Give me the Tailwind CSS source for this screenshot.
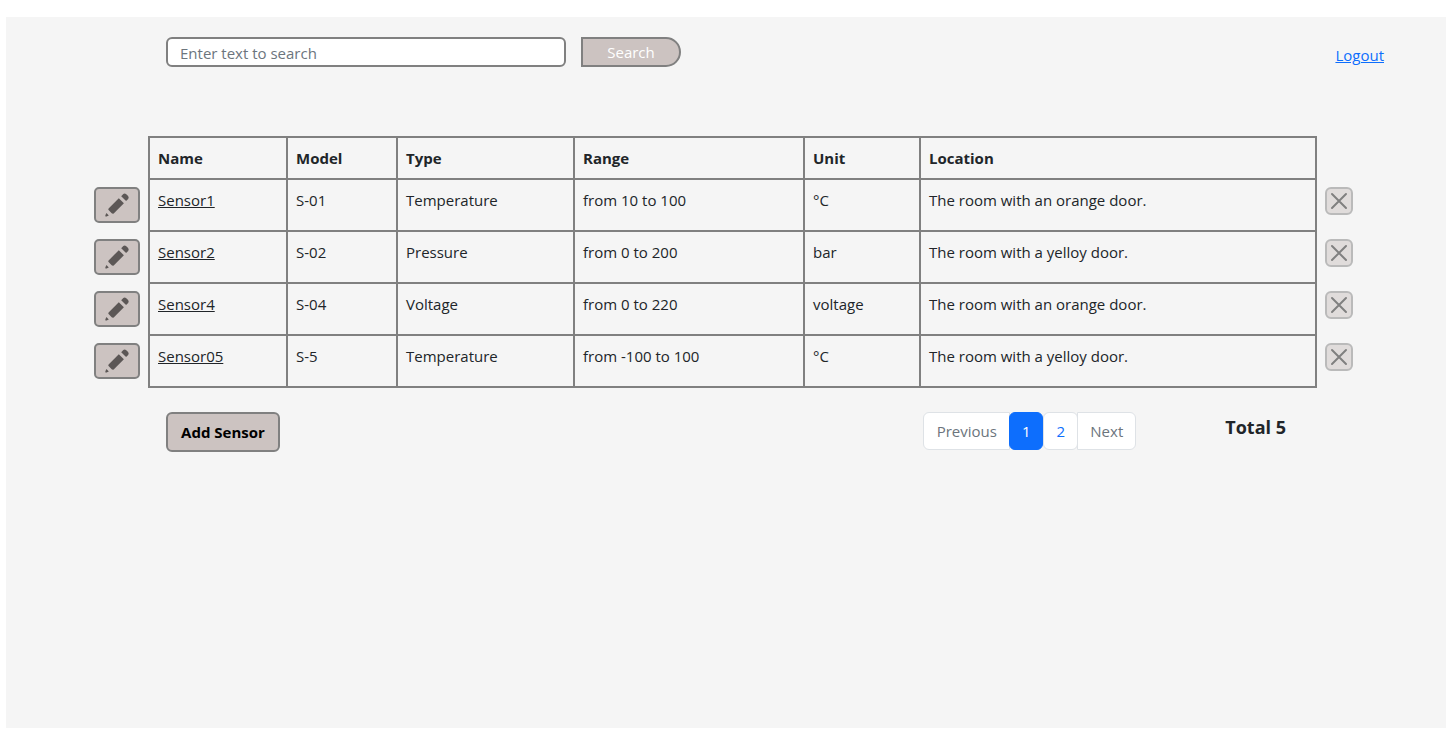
<!DOCTYPE html>
<html lang="en">
<head>
<meta charset="utf-8">
<meta name="viewport" content="width=device-width, initial-scale=1">
<title>Sensors</title>
<script src="https://cdn.jsdelivr.net/npm/@tailwindcss/browser@4"></script>
</head>
<body class="flex min-h-screen flex-col bg-white pt-[17px] pr-[5px] pb-2 pl-[6px] font-['Open_Sans','Noto_Sans',sans-serif] text-[15px] leading-6 text-[#212529]">
<svg class="hidden" aria-hidden="true">
  <symbol id="pencil" viewBox="0 0 26 26">
    <path d="M2.4 21 4.8 23.4 2.6 24.4Q.8 25 1.4 23.2Z"/>
    <path d="M4.6 16.4 14.8 6.2 19.9 11.3 9.7 21.5Q8.6 22 7.7 21.2L4.8 18.3Q3.8 17.3 4.6 16.4Z"/>
    <path d="M17.2 4.2 19.3 2Q20.6.9 22 2L24.1 4.1Q25.2 5.5 24.2 6.9L22.1 9Z"/>
  </symbol>
  <symbol id="cross" viewBox="0 0 18 18"><path d="M2 2 16 16M16 2 2 16" fill="none" stroke="#808080" stroke-width="2" stroke-linecap="round"/></symbol>
</svg>
<main class="grow bg-[#f5f5f5] pt-5 pr-[85px] pl-20">
  <header class="flex items-start pl-20">
    <form class="flex gap-[15px]">
      <input type="search" aria-label="Search sensors" placeholder="Enter text to search" class="h-[30px] w-[400px] rounded-md border-2 border-[#808080] bg-white px-3 pt-[2px] placeholder:text-[#6c757d]">
      <button type="button" class="h-[30px] w-[100px] rounded-r-full border-2 border-[#808080] bg-[#ccc3c1] text-white">Search</button>
    </form>
    <a href="#" class="mt-[6px] -mr-[23px] ml-auto text-[#0d6efd] underline">Logout</a>
  </header>

  <table class="mt-[69px] w-full table-fixed border-collapse text-left [&_td]:p-2 [&_td]:align-top [&_th]:p-2">
    <colgroup><col class="w-[63px]"><col class="w-[138px]"><col class="w-[110px]"><col class="w-[177px]"><col class="w-[230px]"><col class="w-[116px]"><col><col class="w-[45px]"></colgroup>
    <thead>
      <tr><td></td><th class="border-2 border-[#808080]">Name</th><th class="border-2 border-[#808080]">Model</th><th class="border-2 border-[#808080]">Type</th><th class="border-2 border-[#808080]">Range</th><th class="border-2 border-[#808080]">Unit</th><th class="border-2 border-[#808080]">Location</th><td></td></tr>
    </thead>
    <tbody>
      <tr>
        <td><button aria-label="Edit Sensor1" class="flex h-9 w-[46px] items-center justify-center rounded-[5px] border-2 border-[#808080] bg-[#ccc3c1]"><svg class="size-[26px] fill-[#5c5756]"><use href="#pencil"/></svg></button></td>
        <td class="border-2 border-[#808080]"><a href="#" class="underline">Sensor1</a></td><td class="border-2 border-[#808080]">S-01</td><td class="border-2 border-[#808080]">Temperature</td><td class="border-2 border-[#808080]">from 10 to 100</td><td class="border-2 border-[#808080]">°C</td><td class="border-2 border-[#808080]">The room with an orange door.</td>
        <td><button aria-label="Delete Sensor1" class="flex size-7 items-center justify-center rounded-[6px] border-2 border-[#bababa] bg-[#e0dcdb]"><svg class="size-[18px]"><use href="#cross"/></svg></button></td>
      </tr>
      <tr>
        <td><button aria-label="Edit Sensor2" class="flex h-9 w-[46px] items-center justify-center rounded-[5px] border-2 border-[#808080] bg-[#ccc3c1]"><svg class="size-[26px] fill-[#5c5756]"><use href="#pencil"/></svg></button></td>
        <td class="border-2 border-[#808080]"><a href="#" class="underline">Sensor2</a></td><td class="border-2 border-[#808080]">S-02</td><td class="border-2 border-[#808080]">Pressure</td><td class="border-2 border-[#808080]">from 0 to 200</td><td class="border-2 border-[#808080]">bar</td><td class="border-2 border-[#808080]">The room with a yelloy door.</td>
        <td><button aria-label="Delete Sensor2" class="flex size-7 items-center justify-center rounded-[6px] border-2 border-[#bababa] bg-[#e0dcdb]"><svg class="size-[18px]"><use href="#cross"/></svg></button></td>
      </tr>
      <tr>
        <td><button aria-label="Edit Sensor4" class="flex h-9 w-[46px] items-center justify-center rounded-[5px] border-2 border-[#808080] bg-[#ccc3c1]"><svg class="size-[26px] fill-[#5c5756]"><use href="#pencil"/></svg></button></td>
        <td class="border-2 border-[#808080]"><a href="#" class="underline">Sensor4</a></td><td class="border-2 border-[#808080]">S-04</td><td class="border-2 border-[#808080]">Voltage</td><td class="border-2 border-[#808080]">from 0 to 220</td><td class="border-2 border-[#808080]">voltage</td><td class="border-2 border-[#808080]">The room with an orange door.</td>
        <td><button aria-label="Delete Sensor4" class="flex size-7 items-center justify-center rounded-[6px] border-2 border-[#bababa] bg-[#e0dcdb]"><svg class="size-[18px]"><use href="#cross"/></svg></button></td>
      </tr>
      <tr>
        <td><button aria-label="Edit Sensor05" class="flex h-9 w-[46px] items-center justify-center rounded-[5px] border-2 border-[#808080] bg-[#ccc3c1]"><svg class="size-[26px] fill-[#5c5756]"><use href="#pencil"/></svg></button></td>
        <td class="border-2 border-[#808080]"><a href="#" class="underline">Sensor05</a></td><td class="border-2 border-[#808080]">S-5</td><td class="border-2 border-[#808080]">Temperature</td><td class="border-2 border-[#808080]">from -100 to 100</td><td class="border-2 border-[#808080]">°C</td><td class="border-2 border-[#808080]">The room with a yelloy door.</td>
        <td><button aria-label="Delete Sensor05" class="flex size-7 items-center justify-center rounded-[6px] border-2 border-[#bababa] bg-[#e0dcdb]"><svg class="size-[18px]"><use href="#cross"/></svg></button></td>
      </tr>
    </tbody>
  </table>

  <footer class="mt-6 flex items-start pr-[75px] pl-20">
    <button class="h-10 w-[114px] rounded-md border-2 border-[#808080] bg-[#ccc3c1] font-bold whitespace-nowrap text-black">Add Sensor</button>
    <nav aria-label="Pages" class="ml-auto flex text-[#6c757d]">
      <button class="h-[38px] w-[87px] rounded-l-md border border-[#dee2e6] bg-white">Previous</button>
      <button aria-current="page" class="z-10 -ml-px h-[38px] w-[34px] rounded-md border border-[#0d6efd] bg-[#0d6efd] text-white">1</button>
      <button class="h-[38px] w-[35px] rounded-md border border-[#dee2e6] bg-white text-[#0d6efd]">2</button>
      <button class="-ml-px h-[38px] w-[59px] rounded-r-md border border-[#dee2e6] bg-white">Next</button>
    </nav>
    <p class="mt-[3px] ml-[89px] text-lg leading-6 font-bold">Total 5</p>
  </footer>
</main>
</body>
</html>
